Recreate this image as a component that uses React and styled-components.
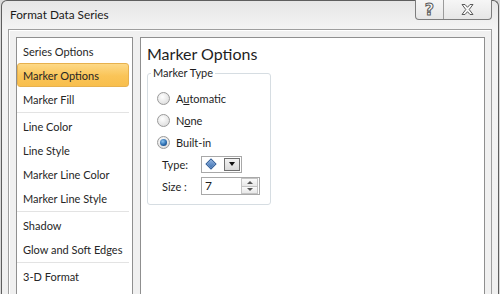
import React from "react";
import styled, { createGlobalStyle } from "styled-components";

const GlobalStyle = createGlobalStyle`
  html, body {
    margin: 0;
    padding: 0;
    overflow: hidden;
    background: #d9d9d9;
  }
  body {
    font-family: Lato, "Open Sans", sans-serif;
    color: #1e1e1e;
  }
`;

const Window = styled.div`
  margin-left: 1px;
  width: 498px;
  height: 300px;
  box-sizing: border-box;
  border: 1px solid #5e5e5e;
  border-bottom: none;
  border-radius: 6px 6px 0 0;
  background: linear-gradient(#e6e6e6, #f4f4f4 28px, #f0f0f0);
  display: flex;
  flex-direction: column;
`;

const TitleBar = styled.div`
  height: 28px;
  flex: none;
  display: flex;
  align-items: flex-start;
  padding-left: 8px;
`;

const Title = styled.div`
  margin-top: 6px;
  font-size: 11.8px;
  line-height: 16px;
  color: #1a1a1a;
`;

const Caption = styled.div`
  margin: -1px 6px 0 auto;
  display: flex;
  height: 19px;
  border: 1px solid #7d7d7d;
  border-top: none;
  border-radius: 0 0 4px 4px;
  background: linear-gradient(#f6f6f6, #e6e6e6);
  overflow: hidden;
`;

const CapButton = styled.div`
  width: ${(p) => p.$w}px;
  display: flex;
  align-items: center;
  justify-content: center;
  border-left: ${(p) => (p.$first ? "none" : "1px solid #9a9a9a")};
`;

const HelpGlyph = styled.span`
  font-family: "DejaVu Sans", sans-serif;
  font-weight: bold;
  font-size: 16px;
  line-height: 16px;
  color: #fafafa;
  -webkit-text-stroke: 1px #5a5a5a;
`;

const Frame = styled.div`
  flex: 1;
  margin: 0 6px;
  border: 1px solid #9e9e9e;
  border-bottom: none;
  box-shadow: inset 1px 1px 0 #fff;
  background: #f0f0f0;
  padding: 7px 6px 0 7px;
  display: flex;
  gap: 7px;
`;

const Panel = styled.div`
  background: #fff;
  border: 1px solid #8f8f8f;
  border-bottom: none;
`;

const NavPanel = styled(Panel)`
  width: 117px;
  box-sizing: border-box;
  padding-top: 1px;
`;

const NavItem = styled.div`
  height: 24px;
  box-sizing: border-box;
  margin-right: 3px;
  padding-left: 5px;
  display: flex;
  align-items: center;
  white-space: nowrap;
  font-size: 11px;
  color: #262626;
  border: 1px solid ${(p) => (p.$active ? "#e7b14e" : "transparent")};
  border-radius: 3px;
  background: ${(p) =>
    p.$active ? "linear-gradient(#fdd987, #fac457 55%, #f8bf4d)" : "none"};
`;

const NavSep = styled.div`
  height: 1px;
  margin: 1px 3px 1px 0;
  background: #e3e3e3;
`;

const ContentPanel = styled(Panel)`
  flex: 1;
  padding: 5px 0 0 6px;
`;

const Heading = styled.h1`
  margin: 0;
  font-size: 16px;
  line-height: 22px;
  font-weight: normal;
  color: #1e1e1e;
`;

const Group = styled.fieldset`
  margin: 0;
  width: 124px;
  box-sizing: border-box;
  border: 1px solid #d6dde2;
  border-radius: 3px;
  padding: 0 0 7px 9px;
`;

const Legend = styled.legend`
  margin-left: -6px;
  padding: 0 2px;
  font-size: 11px;
  line-height: 16px;
`;

const GroupBody = styled.div`
  display: flex;
  flex-direction: column;
  padding-top: 6px;
`;

const RadioRow = styled.label`
  height: 22px;
  display: flex;
  align-items: center;
  gap: 6px;
  font-size: 11px;
`;

const RadioDot = styled.span`
  width: 13px;
  height: 13px;
  box-sizing: border-box;
  border-radius: 50%;
  border: 1px solid #9a9a9a;
  background: radial-gradient(circle at 40% 35%, #ffffff, #e2e2e2 70%, #cfcfcf);
  display: flex;
  align-items: center;
  justify-content: center;
  &::after {
    content: "";
    width: 7px;
    height: 7px;
    border-radius: 50%;
    display: ${(p) => (p.$checked ? "block" : "none")};
    background: radial-gradient(circle at 40% 35%, #8cc4f0, #2a6cb0 55%, #12305e);
  }
`;

const FieldRow = styled.div`
  height: 22px;
  display: flex;
  align-items: center;
  padding-left: 5px;
  font-size: 11px;
`;

const FieldLabel = styled.span`
  width: 39px;
`;

const Picker = styled.div`
  width: 41px;
  height: 17px;
  box-sizing: border-box;
  border: 1px solid #a8a8a8;
  background: #fff;
  display: flex;
  justify-content: space-between;
  padding: 1px;
`;

const Diamond = styled.span`
  width: 6px;
  height: 6px;
  margin: 2px 0 0 4px;
  transform: rotate(45deg);
  background: linear-gradient(135deg, #8fb4e3, #3c6fb0);
  border: 1px solid #2f5d99;
`;

const DropButton = styled.div`
  width: 16px;
  box-sizing: border-box;
  border: 1px solid #707070;
  background: linear-gradient(#f2f2f2, #dadada);
  display: flex;
  align-items: center;
  justify-content: center;
  &::after {
    content: "";
    border-left: 3px solid transparent;
    border-right: 3px solid transparent;
    border-top: 4px solid #111;
  }
`;

const Spinner = styled.div`
  width: 59px;
  height: 18px;
  box-sizing: border-box;
  border: 1px solid #a8a8a8;
  background: #fff;
  display: flex;
`;

const SpinValue = styled.span`
  flex: 1;
  padding-left: 3px;
  font-size: 12px;
  line-height: 16px;
`;

const SpinButtons = styled.div`
  width: 17px;
  display: flex;
  flex-direction: column;
  padding: 0 1px 0 0;
`;

const SpinHalf = styled.div`
  flex: 1;
  border: 1px solid #c4c4c4;
  margin-top: ${(p) => (p.$down ? "-1px" : "0")};
  background: linear-gradient(#fafafa, #e8e8e8);
  display: flex;
  align-items: center;
  justify-content: center;
  &::after {
    content: "";
    border-left: 3px solid transparent;
    border-right: 3px solid transparent;
    ${(p) =>
      p.$down ? "border-top: 3px solid #555;" : "border-bottom: 3px solid #555;"}
  }
`;

const navGroups = [
  ["Series Options", "Marker Options", "Marker Fill"],
  ["Line Color", "Line Style", "Marker Line Color", "Marker Line Style"],
  ["Shadow", "Glow and Soft Edges"],
  ["3-D Format"],
];

const Radio = ({ checked, children }) => (
  <RadioRow>
    <RadioDot $checked={checked} />
    <span>{children}</span>
  </RadioRow>
);

const App = () => {
  return (
    <>
      <GlobalStyle />
      <Window>
        <TitleBar>
          <Title>Format Data Series</Title>
          <Caption>
            <CapButton $w={27} $first>
              <HelpGlyph>?</HelpGlyph>
            </CapButton>
            <CapButton $w={47}>
              <svg width="13" height="11" viewBox="0 0 13 11">
                <polygon
                  points="1,0.5 4,0.5 6.5,3.3 9,0.5 12,0.5 8.2,5.5 12,10.5 9,10.5 6.5,7.7 4,10.5 1,10.5 4.8,5.5"
                  fill="#fafafa"
                  stroke="#5a5a5a"
                  strokeWidth="1"
                  strokeLinejoin="round"
                />
              </svg>
            </CapButton>
          </Caption>
        </TitleBar>

        <Frame>
          <NavPanel>
            {navGroups.map((group, gi) => (
              <React.Fragment key={gi}>
                {gi > 0 && <NavSep />}
                {group.map((item) => (
                  <NavItem key={item} $active={item === "Marker Options"}>
                    {item}
                  </NavItem>
                ))}
              </React.Fragment>
            ))}
          </NavPanel>

          <ContentPanel>
            <Heading>Marker Options</Heading>
            <Group>
              <Legend>Marker Type</Legend>
              <GroupBody>
                <Radio>
                  A<u>u</u>tomatic
                </Radio>
                <Radio>
                  N<u>o</u>ne
                </Radio>
                <Radio checked>Built-in</Radio>
                <FieldRow>
                  <FieldLabel>Type:</FieldLabel>
                  <Picker>
                    <Diamond />
                    <DropButton />
                  </Picker>
                </FieldRow>
                <FieldRow>
                  <FieldLabel>Size :</FieldLabel>
                  <Spinner>
                    <SpinValue>7</SpinValue>
                    <SpinButtons>
                      <SpinHalf />
                      <SpinHalf $down />
                    </SpinButtons>
                  </Spinner>
                </FieldRow>
              </GroupBody>
            </Group>
          </ContentPanel>
        </Frame>
      </Window>
    </>
  );
};

export default App;
